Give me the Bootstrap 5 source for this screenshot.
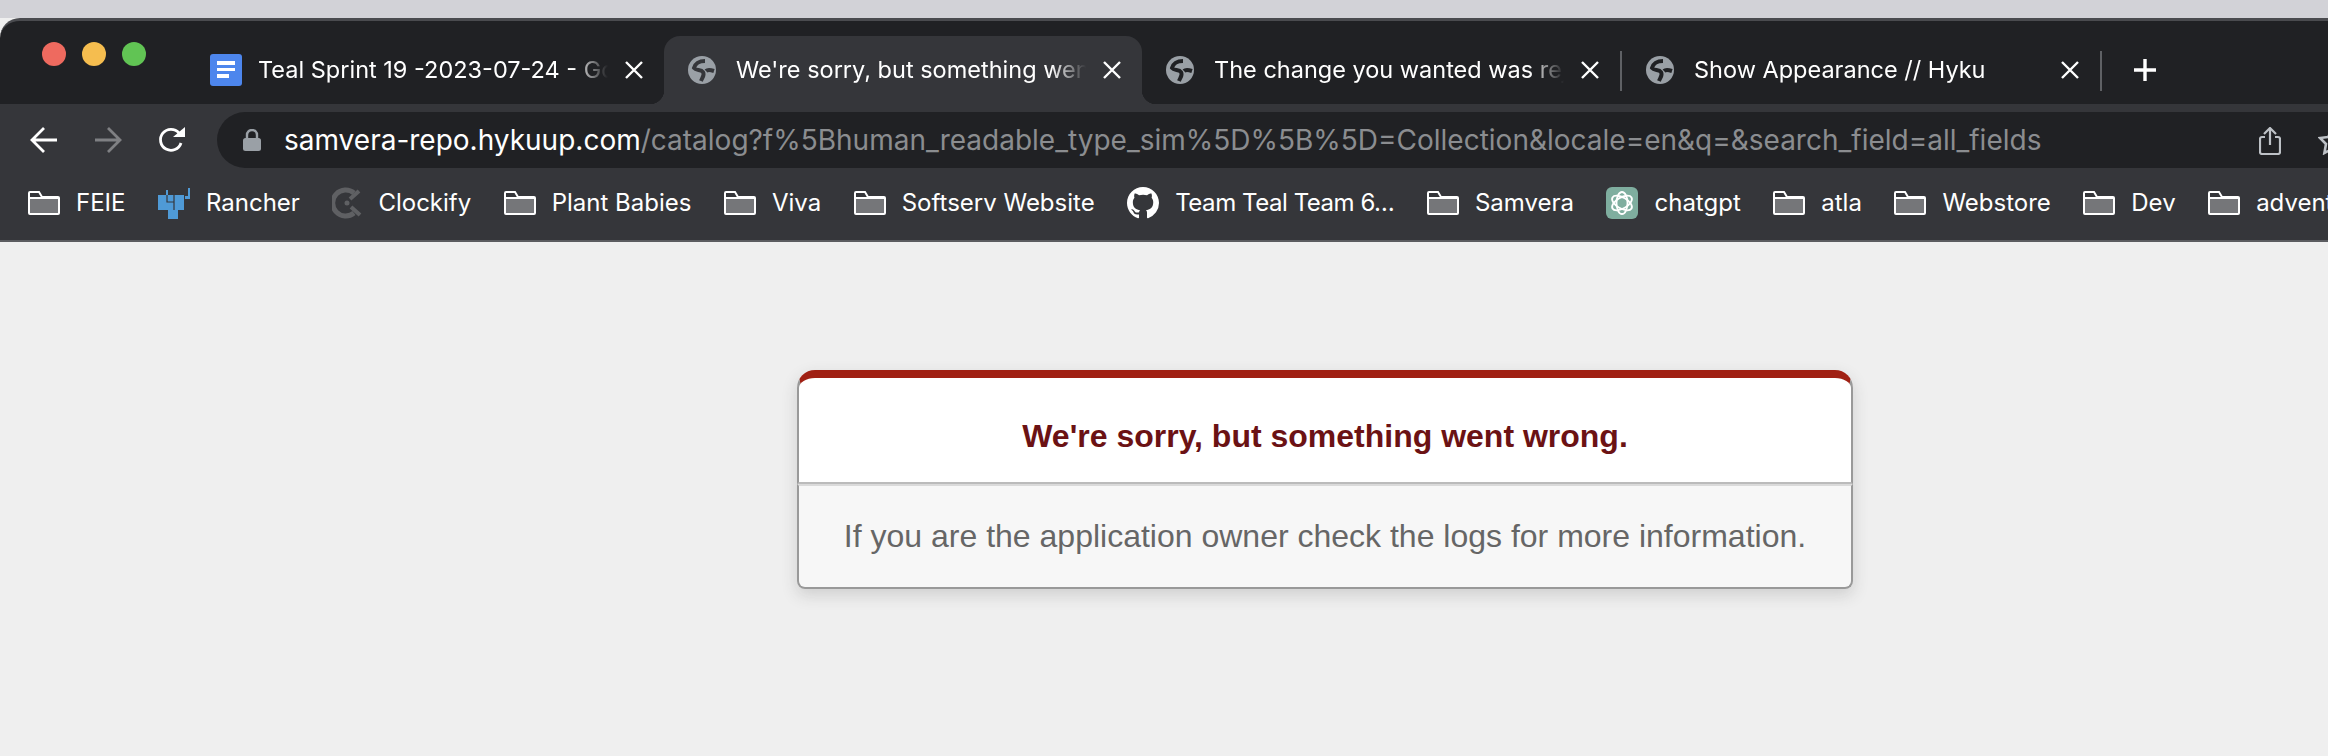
<!DOCTYPE html>
<html lang="en">
<head>
  <meta charset="UTF-8" />
  <title>We're sorry, but something went wrong</title>
  <link href="https://cdn.jsdelivr.net/npm/bootstrap@5.3.3/dist/css/bootstrap.min.css" rel="stylesheet" />
  <style>
    body {
      background: #efefef;
      overflow: hidden;
      height: 756px;
      font-family: Inter, "Liberation Sans", sans-serif;
    }
    .desk-strip { height: 18px; background: #d2d2d7; }
    .window-top {
      height: 86px;
      background: #202124;
      border-top: 3px solid #4a4b4f;
      border-top-left-radius: 20px;
      padding-top: 15px;
    }
    .traffic { width: 186px; padding-left: 42px; padding-bottom: 38px; gap: 16px; }
    .traffic span { width: 24px; height: 24px; border-radius: 50%; }
    .tl-red { background: #ee6a5f; }
    .tl-yellow { background: #f5bd4f; }
    .tl-green { background: #61c454; }
    .tab-item {
      width: 478px;
      height: 68px;
      color: #fff;
      font-size: 23.5px;
      position: relative;
    }
    .tab-icon { width: 80px; padding-left: 24px; }
    .tab-title {
      width: 350px;
      margin-left: -8px;
      -webkit-mask-image: linear-gradient(to right, #000 90%, transparent 100%);
      mask-image: linear-gradient(to right, #000 90%, transparent 100%);
    }
    .tab-close { width: 20px; margin-left: 16px; }
    .tab-active {
      background: #35363a;
      border-radius: 16px 16px 0 0;
    }
    .tab-active::before, .tab-active::after {
      content: "";
      position: absolute;
      bottom: 0;
      width: 14px;
      height: 14px;
    }
    .tab-active::before { left: -14px; background: radial-gradient(circle at 0 0, #202124 14px, #35363a 14.5px); }
    .tab-active::after { right: -14px; background: radial-gradient(circle at 100% 0, #202124 14px, #35363a 14.5px); }
    .tab-sep { width: 2px; height: 40px; background: #5f6165; margin-bottom: 13px; flex-shrink: 0; }
    .tab-plus { width: 86px; height: 68px; }
    .tool-row { height: 64px; background: #35363a; padding-top: 8px; }
    .nav-btns { width: 217px; padding-left: 30px; gap: 36px; }
    .url-box {
      width: 2200px;
      height: 56px;
      background: #202124;
      border-radius: 28px;
      padding-left: 26px;
      font-size: 28px;
    }
    .url-host { color: #fff; margin-left: 23px; }
    .url-rest { color: #8b8d90; }
    .url-share { position: absolute; left: 2259px; top: 23px; }
    .url-star { position: absolute; left: 2318px; top: 23px; }
    .mark-row {
      height: 74px;
      background: #35363a;
      border-bottom: 2px solid #5b5c60;
      padding-left: 28px;
      padding-bottom: 2px;
      color: #fff;
      font-size: 24px;
    }
    .mark-item { gap: 16px; margin-right: 32.5px; }
    .mark-item svg { flex-shrink: 0; }
    .mark-tight { letter-spacing: -.45px; }
    .err-box {
      width: 1056px;
      margin-left: 797px;
      margin-top: 128px;
      font-family: "Liberation Sans", Arial, sans-serif;
      border-radius: 18px 18px 8px 8px;
      box-shadow: 0 6px 16px rgba(50, 50, 50, .17);
    }
    .err-head {
      height: 114px;
      padding-top: 11px;
      background: #fff;
      border-top: 8px solid #a02013;
      border-left: 2px solid #999;
      border-right: 2px solid #999;
      border-bottom: 2px solid #bbb;
      border-radius: 18px 18px 0 0;
      color: #6b1214;
      font-size: 32px;
      font-weight: 700;
    }
    .err-body {
      height: 105px;
      padding-bottom: 2px;
      background: #f7f7f7;
      border-top: 2px solid #dadada;
      border-left: 2px solid #999;
      border-right: 2px solid #999;
      border-bottom: 2px solid #999;
      border-radius: 0 0 8px 8px;
      color: #666;
      font-size: 32px;
    }
  </style>
</head>
<body>

<!-- icons -->
<svg width="0" height="0" class="d-block">
  <symbol id="ic-globe" viewBox="0 0 28 28">
    <circle cx="14" cy="14" r="14" fill="#9aa0a6" />
    <path d="M17 5C11 5 7 8 6 12c2 3 7 1 9 4 2 3-1 6-2 9" fill="none" stroke="currentColor" stroke-width="4" />
    <path d="M18 15c2-2 5-1 8 0" fill="none" stroke="currentColor" stroke-width="4" />
  </symbol>
  <symbol id="ic-close" viewBox="0 0 20 20">
    <path d="M2 2l16 16M18 2L2 18" stroke="#fff" stroke-width="2.4" fill="none" />
  </symbol>
  <symbol id="ic-folder" viewBox="0 0 32 24">
    <path d="M2 7h28v15H2z" fill="#757679" />
    <path d="M1 22V2a1 1 0 0 1 1-1h9l3 5h16a1 1 0 0 1 1 1v15a1 1 0 0 1-1 1H2a1 1 0 0 1-1-1zM1 7h30" fill="none" stroke="#fff" stroke-width="2" />
  </symbol>
</svg>

<div class="desk-strip"></div>

<!-- onglets -->
<div class="window-top d-flex align-items-end">
  <div class="traffic d-flex align-items-center flex-shrink-0">
    <span class="tl-red"></span><span class="tl-yellow"></span><span class="tl-green"></span>
  </div>

  <div class="tab-item d-flex align-items-center flex-shrink-0">
    <div class="tab-icon">
      <svg width="32" height="32" viewBox="0 0 32 32" class="d-block"><rect width="32" height="32" rx="3" fill="#4d86ed" /><path d="M7 7h18v4H7zM7 14h18v3H7zM7 20h12v4H7z" fill="#fff" /></svg>
    </div>
    <div class="tab-title overflow-hidden text-nowrap">Teal Sprint 19 -2023-07-24 - Google Docs</div>
    <svg class="tab-close flex-shrink-0" height="20"><use href="#ic-close" /></svg>
  </div>

  <div class="tab-item tab-active d-flex align-items-center flex-shrink-0">
    <div class="tab-icon">
      <svg width="28" height="28" class="d-block" style="color:#35363a"><use href="#ic-globe" /></svg>
    </div>
    <div class="tab-title overflow-hidden text-nowrap">We're sorry, but something went wrong</div>
    <svg class="tab-close flex-shrink-0" height="20"><use href="#ic-close" /></svg>
  </div>

  <div class="tab-item d-flex align-items-center flex-shrink-0">
    <div class="tab-icon">
      <svg width="28" height="28" class="d-block" style="color:#202124"><use href="#ic-globe" /></svg>
    </div>
    <div class="tab-title overflow-hidden text-nowrap">The change you wanted was rejected</div>
    <svg class="tab-close flex-shrink-0" height="20"><use href="#ic-close" /></svg>
  </div>
  <div class="tab-sep"></div>

  <div class="tab-item d-flex align-items-center flex-shrink-0">
    <div class="tab-icon">
      <svg width="28" height="28" class="d-block" style="color:#202124"><use href="#ic-globe" /></svg>
    </div>
    <div class="tab-title overflow-hidden text-nowrap">Show Appearance // Hyku</div>
    <svg class="tab-close flex-shrink-0" height="20"><use href="#ic-close" /></svg>
  </div>
  <div class="tab-sep"></div>

  <div class="tab-plus d-flex align-items-center justify-content-center flex-shrink-0">
    <svg width="24" height="24" viewBox="0 0 24 24"><path d="M12 1v22M1 12h22" stroke="#fff" stroke-width="3.4" /></svg>
  </div>
</div>

<!-- barre d'adresse -->
<div class="tool-row d-flex position-relative">
  <div class="nav-btns d-flex align-items-center flex-shrink-0">
    <svg width="28" height="28" viewBox="0 0 28 28"><path d="M27 14H3M14 2L2 14l12 12" fill="none" stroke="#fff" stroke-width="2.8" /></svg>
    <svg width="28" height="28" viewBox="0 0 28 28"><path d="M1 14h24M14 2l12 12-12 12" fill="none" stroke="#7f8083" stroke-width="2.8" /></svg>
    <svg width="28" height="28" viewBox="0 0 28 28"><path d="M23 17a10.500 10.500 0 1 1-2-10" fill="none" stroke="#fff" stroke-width="2.8" /><path d="M15 11L27 11 27 1z" fill="#fff" /></svg>
  </div>
  <div class="url-box d-flex align-items-center flex-shrink-0 text-nowrap">
    <svg width="18" height="22" viewBox="0 0 18 22" class="flex-shrink-0"><path d="M4 10V6a5 5 0 0 1 10 0v4" fill="none" stroke="#9aa0a6" stroke-width="2.4" /><rect y="9" width="18" height="13" rx="2.500" fill="#9aa0a6" /></svg>
    <span class="url-host">samvera-repo.hykuup.com</span><span class="url-rest">/catalog?f%5Bhuman_readable_type_sim%5D%5B%5D=Collection&amp;locale=en&amp;q=&amp;search_field=all_fields</span>
  </div>
  <svg class="url-share" width="22" height="28" viewBox="0 0 22 28"><path d="M11 18V2M5 7l6-6 6 6M6 10H3a2 2 0 0 0-2 2v13a2 2 0 0 0 2 2h16a2 2 0 0 0 2-2V12a2 2 0 0 0-2-2h-3" fill="none" stroke="#bdc1c6" stroke-width="2.2" /></svg>
  <svg class="url-star" width="28" height="28" viewBox="0 0 28 28"><path d="M14 2l3.700 8 8.300 1-6 6 1.600 9L14 22l-7.600 4L8 17l-6-6 8.300-1z" fill="none" stroke="#bdc1c6" stroke-width="2.600" /></svg>
</div>

<!-- favoris -->
<div class="mark-row d-flex align-items-center text-nowrap overflow-hidden" id="bookmarks"></div>

<!-- page d'erreur -->
<div class="err-box">
  <div class="err-head d-flex align-items-center justify-content-center">We're sorry, but something went wrong.</div>
  <div class="err-body d-flex align-items-center justify-content-center">If you are the application owner check the logs for more information.</div>
</div>

<script>
  const rancher = `<svg width="32" height="32" viewBox="0 0 32 32"><path d="M0 8h8V3h2v5h16v15H20v9H10v-9H0z" fill="#4f9ad6"/><path d="M27 9h3V1h2v11h-5z" fill="#4f9ad6"/><path d="M9 8v7h7v8M16 8v7" stroke="#35363a" stroke-width="1.200" fill="none"/></svg>`;
  const clockify = `<svg width="30" height="32" viewBox="0 0 30 32"><path d="M22 6A13 13 0 1 0 22 26" fill="none" stroke="#5f6063" stroke-width="5"/><path d="M18 12l9-8M19 20l9 8" stroke="#5f6063" stroke-width="4"/><circle cx="15" cy="16" r="2.500" fill="#5f6063"/></svg>`;
  const github = `<svg width="32" height="32" viewBox="0 0 16 16"><path fill="#fff" d="M8 0C3.580 0 0 3.580 0 8c0 3.540 2.290 6.530 5.470 7.590.4.070.55-.17.55-.38 0-.19-.01-.82-.01-1.490-2.010.37-2.530-.49-2.690-.94-.09-.23-.48-.94-.82-1.130-.28-.15-.68-.52-.01-.53.63-.01 1.080.58 1.230.82.72 1.210 1.870.87 2.330.66.07-.52.28-.87.51-1.070-1.780-.2-3.640-.89-3.640-3.950 0-.87.31-1.590.82-2.150-.08-.2-.36-1.020.08-2.120 0 0 .67-.21 2.200.82.64-.18 1.320-.27 2-.27.68 0 1.360.09 2 .27 1.530-1.040 2.200-.82 2.200-.82.44 1.100.16 1.920.08 2.120.51.56.82 1.270.82 2.150 0 3.070-1.870 3.750-3.650 3.950.29.25.54.73.54 1.480 0 1.070-.01 1.930-.01 2.200 0 .21.15.46.55.38A8.013 8.013 0 0 0 16 8c0-4.420-3.580-8-8-8z"/></svg>`;
  const chatgpt = `<svg width="32" height="32" viewBox="0 0 32 32"><rect width="32" height="32" rx="6" fill="#7fae9f"/><g fill="none" stroke="#fff" stroke-width="1.800"><ellipse cx="16" cy="16" rx="5.500" ry="11"/><ellipse cx="16" cy="16" rx="5.500" ry="11" transform="rotate(60 16 16)"/><ellipse cx="16" cy="16" rx="5.500" ry="11" transform="rotate(120 16 16)"/></g></svg>`;
  const folder = `<svg width="32" height="24"><use href="#ic-folder"/></svg>`;

  const marks = [
    [folder, "FEIE"], [rancher, "Rancher"], [clockify, "Clockify"], [folder, "Plant Babies"],
    [folder, "Viva"], [folder, "Softserv Website"], [github, "Team Teal Team 6…", "mark-tight"], [folder, "Samvera"],
    [chatgpt, "chatgpt"], [folder, "atla"], [folder, "Webstore"], [folder, "Dev"], [folder, "adventure"]
  ];
  const row = document.getElementById("bookmarks");
  marks.forEach(([icon, label, extra]) => {
    const item = document.createElement("div");
    item.className = "mark-item d-flex align-items-center flex-shrink-0";
    item.innerHTML = icon + "<span></span>";
    const span = item.querySelector("span");
    span.textContent = label;
    if (extra) span.className = extra;
    row.appendChild(item);
  });
</script>
<script src="https://cdn.jsdelivr.net/npm/bootstrap@5.3.3/dist/js/bootstrap.bundle.min.js"></script>
</body>
</html>
